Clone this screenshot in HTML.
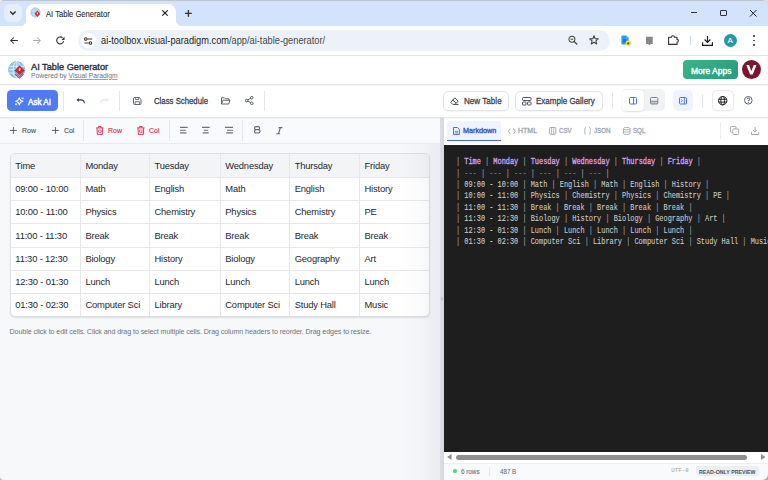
<!DOCTYPE html>
<html><head><meta charset="utf-8">
<style>
*{box-sizing:border-box;margin:0;padding:0}
html,body{width:768px;height:480px;overflow:hidden;background:#fff;font-family:"Liberation Sans",sans-serif;position:relative}
.a{position:absolute}
svg{position:absolute;overflow:visible}
.t{position:absolute;white-space:nowrap;line-height:1}
.sb{font-weight:normal;-webkit-text-stroke:0.28px currentColor;transform-origin:0 0}
.code{position:absolute;left:456px;top:156.3px;font-family:"Liberation Mono",monospace;font-size:8.3px;line-height:11.39px;letter-spacing:0;transform:scaleX(0.8333);transform-origin:0 0;color:#cdcdcd;-webkit-text-stroke:0.08px currentColor;white-space:pre}
.p{color:#a0a0a0}
.h{color:#d29ce0;-webkit-text-stroke:0.35px currentColor}
.g{color:#6e6e6e}
.btn{position:absolute;border:1px solid #e1e4e8;border-radius:5px;background:#fff;box-shadow:0 1px 1px rgba(0,0,0,.04)}
.vs{position:absolute;width:1px;background:#e5e7eb}
.row{position:absolute;left:0;width:418px;height:23.3px;border-bottom:1px solid #e6e8eb}
.cell{position:absolute;top:0;height:100%;font-size:9.4px;letter-spacing:-0.17px;color:#24292f;line-height:23.3px;padding-left:5.4px;white-space:nowrap}
.cd{position:absolute;top:0;width:1px;height:161.5px;background:#e6e8eb}
</style></head><body>

<!-- ============ TAB STRIP ============ -->
<div class="a" style="left:0;top:0;width:768px;height:26px;background:#d3e3fb"></div>
<div class="a" style="left:0;top:0;width:768px;height:1px;background:#bfc5cf"></div>
<div class="a" style="left:4px;top:4px;width:18px;height:18px;border-radius:6px;background:#e7eefb"></div>
<svg style="left:9px;top:10.5px" width="8" height="5" viewBox="0 0 8 5"><path d="M1.2 0.6 L3.9 3.3 L6.6 0.6" fill="none" stroke="#2a2a2a" stroke-width="1.45"/></svg>
<!-- active tab -->
<div class="a" style="left:26px;top:4px;width:150px;height:23px;background:#fff;border-radius:8px 8px 0 0"></div>
<div class="a" style="left:20px;top:20px;width:6px;height:6px;background:radial-gradient(circle at 0 0,transparent 6px,#fff 6.3px)"></div>
<div class="a" style="left:176px;top:20px;width:6px;height:6px;background:radial-gradient(circle at 100% 0,transparent 6px,#fff 6.3px)"></div>
<!-- favicon -->
<svg style="left:30.3px;top:7.2px" width="11" height="11" viewBox="0 0 11 11">
<circle cx="5.5" cy="5.5" r="4.6" fill="#a6d6f3" stroke="#a9bccb" stroke-width="0.9"/>
<path d="M1.5 4H9.5M1.5 7H9.5M4 1.2V9.8M7 1.2V9.8" stroke="#d5ecfa" stroke-width="0.5"/>
<path d="M7.3 3.6L10.1 6.8L7.3 10L4.5 6.8Z" fill="#d42a38"/>
<path d="M6.8 5.4H7.9V6.8L7.3 7.6H6.8Z" fill="#fff"/>
</svg>
<div class="t" style="left:46.2px;top:10.2px;font-size:8.7px;transform:scaleX(0.875);transform-origin:0 0;-webkit-text-stroke:0.1px currentColor;color:#1f1f1f">AI Table Generator</div>
<svg style="left:162px;top:10px" width="6" height="6" viewBox="0 0 6 6"><path d="M0.3 0.3L5.7 5.7M5.7 0.3L0.3 5.7" stroke="#1f1f1f" stroke-width="1.2"/></svg>
<svg style="left:184.8px;top:9.6px" width="6.8" height="6.8" viewBox="0 0 6.8 6.8"><path d="M3.4 0V6.8M0 3.4H6.8" stroke="#333" stroke-width="1.35"/></svg>
<!-- window controls -->
<div class="a" style="left:690.5px;top:12px;width:6.8px;height:1px;background:#333"></div>
<div class="a" style="left:720px;top:9.7px;width:6.7px;height:6.4px;border:1px solid #333;border-radius:1px"></div>
<svg style="left:750px;top:9.7px" width="6.5" height="6.5" viewBox="0 0 6.5 6.5"><path d="M0 0L6.5 6.5M6.5 0L0 6.5" stroke="#1f1f1f" stroke-width="1"/></svg>

<!-- ============ BROWSER TOOLBAR ============ -->
<div class="a" style="left:0;top:26px;width:768px;height:29px;background:#fff"></div>
<div class="a" style="left:0;top:55px;width:768px;height:1px;background:#e1e3e6"></div>
<!-- back / fwd / reload -->
<svg style="left:10.4px;top:37.2px" width="8" height="7" viewBox="0 0 8 7"><path d="M7.8 3.5H0.9M3.8 0.5L0.8 3.5L3.8 6.5" fill="none" stroke="#2a2a2a" stroke-width="1.05"/></svg>
<svg style="left:33.1px;top:37.2px" width="8" height="7" viewBox="0 0 8 7"><path d="M0.2 3.5H7.1M4.2 0.5L7.2 3.5L4.2 6.5" fill="none" stroke="#a8abb0" stroke-width="1.05"/></svg>
<svg style="left:56px;top:36px" width="9" height="9" viewBox="0 0 9 9"><path d="M7.6 5.2A3.5 3.5 0 1 1 6.6 1.9" fill="none" stroke="#333" stroke-width="1.15"/><path d="M8.5 0.8V3.9H5.4Z" fill="#333"/></svg>
<!-- omnibox -->
<div class="a" style="left:77.7px;top:29.8px;width:532px;height:21.6px;border-radius:11px;background:#edf2fa"></div>
<div class="a" style="left:80.6px;top:33px;width:15.2px;height:15.2px;border-radius:50%;background:#fff"></div>
<svg style="left:84px;top:36.5px" width="9" height="8" viewBox="0 0 9 8"><path d="M3.4 2H8.2M0.4 6H4.6" stroke="#3c3c3c" stroke-width="1.1"/><circle cx="1.8" cy="2" r="1.3" fill="none" stroke="#3c3c3c" stroke-width="1.1"/><circle cx="6.4" cy="6" r="1.3" fill="none" stroke="#3c3c3c" stroke-width="1.1"/></svg>
<div class="t" style="left:101.3px;top:36px;font-size:10.4px;transform:scaleX(0.89);transform-origin:0 0;color:#1f1f1f">ai-toolbox.visual-paradigm.com<span style="color:#474747">/app/ai-table-generator/</span></div>
<!-- zoom + star -->
<svg style="left:568.2px;top:35px" width="11" height="11" viewBox="0 0 11 11"><circle cx="3.9" cy="4.2" r="3" fill="none" stroke="#444" stroke-width="1.05"/><path d="M6.1 6.5L9.3 9.5M2.6 4.2H5.2" stroke="#444" stroke-width="1.05"/></svg>
<svg style="left:589px;top:35px" width="10" height="10" viewBox="0 0 10 10"><path d="M5 0.8L6.2 3.7L9.3 3.9L6.9 5.9L7.7 9L5 7.3L2.3 9L3.1 5.9L0.7 3.9L3.8 3.7Z" fill="none" stroke="#474747" stroke-width="1.1" stroke-linejoin="round"/></svg>
<!-- extensions -->
<svg style="left:621.4px;top:35px" width="11" height="11" viewBox="0 0 11 11"><path d="M0.4 1.2A0.8 0.8 0 0 1 1.2 0.4H5.2L7.6 2.8V9.6H1.2A0.8 0.8 0 0 1 0.4 8.8Z" fill="#2f9be9"/><path d="M5.2 0.4L7.6 2.8H5.2Z" fill="#45d0d8"/><rect x="2" y="4" width="3" height="3.5" fill="#2277c2"/><circle cx="7.3" cy="8.2" r="2.7" fill="#f4dc3c"/><circle cx="7.3" cy="8.4" r="1.1" fill="#4a5a3a"/></svg>
<svg style="left:646.3px;top:36px" width="7" height="10" viewBox="0 0 7 10"><path d="M0 0.8H6.7V7.9H4.6L3.35 9.3L2.1 7.9H0Z" fill="#858585"/></svg>
<svg style="left:667.7px;top:35px" width="12" height="10" viewBox="0 0 12 10"><path d="M0.6 2.2H3.4A1.5 1.5 0 0 1 6.4 2.2H9V4.4A1.4 1.4 0 0 1 9 7.2V9.4H0.6Z" fill="none" stroke="#333" stroke-width="1.1" stroke-linejoin="round"/></svg>
<div class="a" style="left:689.5px;top:36px;width:1px;height:9px;background:#c9d7f0"></div>
<svg style="left:702px;top:35.5px" width="11" height="10" viewBox="0 0 11 10"><path d="M5.5 0V6.3M2.6 3.5L5.5 6.4L8.4 3.5M0.6 6.2V9.3H10.4V6.2" fill="none" stroke="#1f1f1f" stroke-width="1.2"/></svg>
<div class="a" style="left:724px;top:33.7px;width:13.2px;height:13.2px;border-radius:50%;background:#2a98a4"></div>
<div class="t" style="left:727.6px;top:36.6px;font-size:8px;color:#fff">A</div>
<div class="a" style="left:753.3px;top:35.3px;width:1.6px;height:1.6px;border-radius:50%;background:#3a3a3a"></div>
<div class="a" style="left:753.3px;top:39.7px;width:1.6px;height:1.6px;border-radius:50%;background:#3a3a3a"></div>
<div class="a" style="left:753.3px;top:44.1px;width:1.6px;height:1.6px;border-radius:50%;background:#3a3a3a"></div>

<!-- ============ APP HEADER ============ -->
<div class="a" style="left:0;top:56px;width:768px;height:28.5px;background:#fff"></div>
<div class="a" style="left:0;top:83.6px;width:768px;height:1.2px;background:#e4e6e9;box-shadow:0 1px 1.5px rgba(0,0,0,.05)"></div>
<svg style="left:7.7px;top:60.5px" width="17.4" height="17.4" viewBox="0 0 17.4 17.4">
<circle cx="8.7" cy="8.7" r="8.1" fill="#86c8ef" stroke="#a3b5c2" stroke-width="1"/>
<path d="M1.2 5.3H16.2M0.8 8.7H16.6M1.2 12.1H16.2" stroke="#e4f3fc" stroke-width="0.9"/>
<ellipse cx="8.7" cy="8.7" rx="3.6" ry="8" fill="none" stroke="#e4f3fc" stroke-width="0.9"/>
<path d="M8.7 0.7V16.7" stroke="#e4f3fc" stroke-width="0.8"/>
<path d="M7.2 11.6L11.4 15.8L15.6 11.6M7.2 13.3L11.4 17.2L15.6 13.3" fill="none" stroke="#d42330" stroke-width="1"/>
<path d="M11.55 4.5L16.9 9.5L11.55 14.3L6.4 9.5Z" fill="#d42330"/>
<path d="M10.8 7.3H12.5V8.9L11.9 10H10.8Z" fill="#fff"/>
</svg>
<div class="t sb" style="left:31px;top:62.7px;font-size:9.3px;transform:scaleX(0.99);-webkit-text-stroke:0.38px currentColor;color:#2b3140">AI Table Generator</div>
<div class="t" style="left:31px;top:71.9px;font-size:7.3px;transform:scaleX(0.925);transform-origin:0 0;color:#6b7280">Powered by <span style="text-decoration:underline;text-decoration-color:#9ca3af">Visual Paradigm</span></div>
<div class="a" style="left:683.4px;top:60.4px;width:54.2px;height:18.7px;border-radius:4px;background:linear-gradient(135deg,#3ab585,#2a9a7f)"></div>
<div class="t sb" style="left:690.7px;top:66.8px;font-size:8.8px;transform:scaleX(0.96);-webkit-text-stroke:0.4px #fff;color:#fff">More Apps</div>
<div class="a" style="left:741.8px;top:60.1px;width:19.2px;height:19.2px;border-radius:50%;background:#7c1630"></div>
<svg style="left:0;top:0" width="768" height="480"><path d="M746.3 65H749.1L751.4 71.3L753.7 65H756.5L752.7 74.6H750.1Z" fill="#fff"/></svg>

<!-- ============ APP TOOLBAR ============ -->
<div class="a" style="left:0;top:85px;width:768px;height:32px;background:#fff"></div>
<div class="a" style="left:0;top:116.6px;width:768px;height:1.5px;background:#e3e5e9;box-shadow:0 1px 1.5px rgba(0,0,0,.05)"></div>
<div class="a" style="left:7.1px;top:90.3px;width:51px;height:20.8px;border-radius:4.5px;background:#4e7cf6"></div>
<svg style="left:14.7px;top:96.8px" width="9" height="9" viewBox="0 0 9 9"><path d="M4.3 0.7Q4.8 3.7 8 4.26Q4.8 4.8 4.3 7.9Q3.8 4.8 0.7 4.26Q3.8 3.7 4.3 0.7Z" fill="none" stroke="#fff" stroke-width="1.05" stroke-linejoin="round"/><path d="M6.9 1.2H8.6" stroke="#fff" stroke-width="0.95" stroke-linecap="round"/><circle cx="1" cy="7.3" r="0.95" fill="#fff"/></svg>
<div class="t sb" style="left:27.8px;top:97.5px;font-size:8.8px;transform:scaleX(0.92);-webkit-text-stroke:0.45px #fff;color:#fff">Ask AI</div>
<div class="vs" style="left:62.5px;top:90.8px;height:20px"></div>
<svg style="left:76px;top:97.6px" width="9" height="5.5" viewBox="0 0 9 5.5"><path d="M0.3 1.9L2.9 0V3.8Z" fill="#374151"/><path d="M2.5 1.9H4.6A3.6 3.6 0 0 1 8.4 5.2" fill="none" stroke="#374151" stroke-width="1.15"/></svg>
<svg style="left:100px;top:97.6px" width="9" height="5.5" viewBox="0 0 9 5.5"><path d="M8.7 1.9L6.1 0V3.8Z" fill="#e2e5e9"/><path d="M6.5 1.9H4.4A3.6 3.6 0 0 0 0.6 5.2" fill="none" stroke="#e2e5e9" stroke-width="1.15"/></svg>
<div class="vs" style="left:118.8px;top:90.8px;height:20px"></div>
<svg style="left:132.6px;top:96.7px" width="8.5" height="8" viewBox="0 0 8.5 8"><path d="M1.5 0.5H6.2L8 2.3V6.5A1 1 0 0 1 7 7.5H1.5A1 1 0 0 1 0.5 6.5V1.5A1 1 0 0 1 1.5 0.5Z" fill="none" stroke="#5b6472" stroke-width="1"/><path d="M2.4 0.6V2.5H5.6V0.6M2.1 7.4V4.7H6.4V7.4" fill="none" stroke="#5b6472" stroke-width="0.9"/></svg>
<div class="t sb" style="left:154.3px;top:97.1px;font-size:9px;transform:scaleX(0.865);color:#374151">Class Schedule</div>
<svg style="left:221px;top:96.9px" width="9.5" height="7.5" viewBox="0 0 9.5 7.5"><path d="M0.5 7V0.8H3.5L4.5 1.8H8V3M0.5 7L1.8 3.3H9L7.7 7Z" fill="none" stroke="#4b5563" stroke-width="0.9" stroke-linejoin="round"/></svg>
<svg style="left:244.6px;top:96px" width="8.5" height="9" viewBox="0 0 8.5 9"><circle cx="6.8" cy="1.7" r="1.3" fill="none" stroke="#4b5563" stroke-width="0.9"/><circle cx="1.7" cy="4.5" r="1.3" fill="none" stroke="#4b5563" stroke-width="0.9"/><circle cx="6.8" cy="7.3" r="1.3" fill="none" stroke="#4b5563" stroke-width="0.9"/><path d="M2.8 3.9L5.7 2.3M2.8 5.1L5.7 6.7" stroke="#4b5563" stroke-width="0.9"/></svg>
<div class="vs" style="left:264.4px;top:90.8px;height:20px"></div>

<div class="btn" style="left:442.6px;top:90.6px;width:66.8px;height:20.6px"></div>
<svg style="left:450px;top:97px" width="9" height="8" viewBox="0 0 9 8"><path d="M4.8 0.8L8.2 4.2L5 7.4H2.8L0.8 5.4Z M2.8 3L6 6.2M5 7.4H8.5" fill="none" stroke="#374151" stroke-width="0.95" stroke-linejoin="round"/></svg>
<div class="t sb" style="left:464px;top:97.1px;font-size:9px;transform:scaleX(0.9);color:#374151">New Table</div>
<div class="btn" style="left:514.5px;top:90.6px;width:88px;height:20.6px"></div>
<svg style="left:521.5px;top:96.8px" width="9.5" height="8.5" viewBox="0 0 9.5 8.5"><rect x="0.5" y="0.5" width="8.5" height="3" rx="0.8" fill="none" stroke="#374151" stroke-width="0.9"/><rect x="0.5" y="5" width="3.5" height="3" rx="0.6" fill="none" stroke="#374151" stroke-width="0.9"/><rect x="5.5" y="5" width="3.5" height="3" rx="0.6" fill="none" stroke="#374151" stroke-width="0.9"/></svg>
<div class="t sb" style="left:536px;top:97.1px;font-size:9px;transform:scaleX(0.89);color:#374151">Example Gallery</div>
<div class="vs" style="left:611.5px;top:93px;height:16px"></div>
<div class="a" style="left:621.5px;top:89.2px;width:43.8px;height:22.3px;border-radius:5px;background:#f1f2f4"></div>
<div class="a" style="left:621.8px;top:89.6px;width:22px;height:21.6px;border-radius:4px;background:#fff;box-shadow:0 0.5px 1.5px rgba(0,0,0,.12)"></div>
<svg style="left:628.8px;top:96.9px" width="8" height="7.5" viewBox="0 0 8 7.5"><rect x="0.5" y="0.5" width="7" height="6.5" rx="1" fill="none" stroke="#4f6df5" stroke-width="1"/><path d="M4.6 0.5V7" stroke="#4f6df5" stroke-width="1"/></svg>
<svg style="left:649.7px;top:96.9px" width="8.3" height="7.5" viewBox="0 0 8.3 7.5"><rect x="0.5" y="4.2" width="7.3" height="2.8" fill="#c4c8cf"/><rect x="0.5" y="0.5" width="7.3" height="6.5" rx="1" fill="none" stroke="#7b818b" stroke-width="1"/><path d="M0.5 4.2H7.8" stroke="#7b818b" stroke-width="0.9"/></svg>
<div class="a" style="left:673px;top:90.25px;width:20px;height:20.75px;border-radius:5px;background:#edf3ff"></div>
<svg style="left:679px;top:96.9px" width="8" height="7.5" viewBox="0 0 8 7.5"><rect x="0.5" y="0.5" width="7" height="6.5" rx="1" fill="none" stroke="#4f6df5" stroke-width="1"/><path d="M5.4 0.5V7M2 2.3L3.4 3.75L2 5.2" fill="none" stroke="#4f6df5" stroke-width="0.9"/></svg>
<div class="vs" style="left:702px;top:94px;height:14px"></div>
<div class="btn" style="left:712.4px;top:90.4px;width:21.2px;height:20.4px;border-color:#e8eaed"></div>
<svg style="left:718.2px;top:95.7px" width="9.4" height="9.4" viewBox="0 0 9.4 9.4"><circle cx="4.7" cy="4.7" r="4.2" fill="none" stroke="#1a1a1a" stroke-width="1"/><ellipse cx="4.7" cy="4.7" rx="1.9" ry="4.2" fill="none" stroke="#1a1a1a" stroke-width="0.95"/><path d="M0.7 3.3H8.7M0.7 6.1H8.7" stroke="#1a1a1a" stroke-width="0.95"/></svg>
<svg style="left:743.7px;top:96.4px" width="8.6" height="8.6" viewBox="0 0 8.6 8.6"><circle cx="4.3" cy="4.3" r="3.8" fill="none" stroke="#4b5563" stroke-width="0.9"/><path d="M3 3.2A1.3 1.3 0 1 1 4.3 4.6V5.3" fill="none" stroke="#4b5563" stroke-width="0.9"/><circle cx="4.3" cy="6.6" r="0.5" fill="#4b5563"/></svg>

<!-- ============ LEFT PANEL ============ -->
<div class="a" style="left:0;top:117.8px;width:440px;height:363px;background:#f7f8fa"></div>
<div class="a" style="left:0;top:117.8px;width:440px;height:25.3px;background:#f9fafb"></div>
<div class="a" style="left:0;top:143px;width:440px;height:1px;background:#e7e9ec"></div>
<!-- table toolbar -->
<svg style="left:10.3px;top:126.8px" width="6.8" height="6.8" viewBox="0 0 6.8 6.8"><path d="M3.4 0V6.8M0 3.4H6.8" stroke="#4b5563" stroke-width="0.9"/></svg>
<div class="t sb" style="left:22px;top:127px;font-size:7.9px;transform:scaleX(0.88);-webkit-text-stroke:0.15px currentColor;color:#4b5563">Row</div>
<svg style="left:52.2px;top:126.8px" width="6.8" height="6.8" viewBox="0 0 6.8 6.8"><path d="M3.4 0V6.8M0 3.4H6.8" stroke="#4b5563" stroke-width="0.9"/></svg>
<div class="t sb" style="left:63.9px;top:127px;font-size:7.9px;transform:scaleX(0.87);-webkit-text-stroke:0.15px currentColor;color:#4b5563">Col</div>
<div class="vs" style="left:83.3px;top:120.2px;height:20.5px"></div>
<svg style="left:96.1px;top:125.6px" width="7.7" height="9.1" viewBox="0 0 7.7 9.1"><path d="M0.2 1.9H7.5M2.6 1.9V0.5H5.1V1.9M1 1.9L1.4 8.6H6.3L6.7 1.9" fill="none" stroke="#e0304e" stroke-width="0.95" stroke-linejoin="round"/><rect x="2.7" y="4" width="2.3" height="2.6" fill="none" stroke="#e0304e" stroke-width="0.7"/></svg>
<div class="t sb" style="left:107.9px;top:127px;font-size:7.9px;transform:scaleX(0.88);-webkit-text-stroke:0.15px currentColor;color:#e0304e">Row</div>
<svg style="left:137.2px;top:125.6px" width="7.7" height="9.1" viewBox="0 0 7.7 9.1"><path d="M0.2 1.9H7.5M2.6 1.9V0.5H5.1V1.9M1 1.9L1.4 8.6H6.3L6.7 1.9" fill="none" stroke="#e0304e" stroke-width="0.95" stroke-linejoin="round"/><rect x="2.7" y="4" width="2.3" height="2.6" fill="none" stroke="#e0304e" stroke-width="0.7"/></svg>
<div class="t sb" style="left:149.2px;top:127px;font-size:7.9px;transform:scaleX(0.87);-webkit-text-stroke:0.15px currentColor;color:#e0304e">Col</div>
<div class="vs" style="left:169.2px;top:120.2px;height:20.5px"></div>
<svg style="left:180.3px;top:127px" width="8" height="7" viewBox="0 0 8 7"><path d="M0 0.4H7.7M0 3.3H5.7M0 5.9H6.5" stroke="#6b7280" stroke-width="1.1"/></svg>
<svg style="left:202.3px;top:127px" width="8" height="7" viewBox="0 0 8 7"><path d="M0 0.4H7.7M1.7 3.3H6.2M0.7 5.9H6.7" stroke="#6b7280" stroke-width="1.1"/></svg>
<svg style="left:225px;top:127px" width="8" height="7" viewBox="0 0 8 7"><path d="M0 0.4H8M2 3.3H8M1.3 5.9H8" stroke="#6b7280" stroke-width="1.1"/></svg>
<div class="vs" style="left:241.9px;top:120.2px;height:20.5px"></div>
<svg style="left:254px;top:126.2px" width="6.5" height="7.7" viewBox="0 0 6.5 7.7"><path d="M1.9 0.6H4.1A1.55 1.55 0 0 1 4.1 3.7H1.9A1.3 1.3 0 0 1 0.6 2.4V1.9A1.3 1.3 0 0 1 1.9 0.6ZM1.9 3.7H4.4A1.65 1.65 0 0 1 4.4 7H1.9A1.3 1.3 0 0 1 0.6 5.7V5A1.3 1.3 0 0 1 1.9 3.7Z" fill="none" stroke="#5f6775" stroke-width="1.15"/></svg>
<svg style="left:275.7px;top:126.5px" width="7" height="7.3" viewBox="0 0 7 7.3"><path d="M2.6 0.6H6.4M0.4 6.8H4.2M4.4 0.6L2.4 6.8" fill="none" stroke="#5f6775" stroke-width="1.1"/></svg>

<!-- table -->
<div class="a" style="left:9.7px;top:153.3px;width:420px;height:163.5px;border:1px solid #dcdfe3;border-radius:5px;background:#fff;overflow:hidden;box-shadow:0 1px 1.5px rgba(0,0,0,.1)">
 <div class="row" style="top:0;background:#f3f4f6"></div>
 <div class="row" style="top:23.4px"></div>
 <div class="row" style="top:46.7px"></div>
 <div class="row" style="top:70px"></div>
 <div class="row" style="top:93.3px"></div>
 <div class="row" style="top:116.6px"></div>
 <div class="cd" style="left:69.3px"></div>
 <div class="cd" style="left:138.4px"></div>
 <div class="cd" style="left:208.9px"></div>
 <div class="cd" style="left:278.6px"></div>
 <div class="cd" style="left:348.4px"></div>
 <div class="cell" style="padding-left:4.6px;left:0px;top:0.2px;height:23.3px">Time</div>
<div class="cell" style="left:69.3px;top:0.2px;height:23.3px">Monday</div>
<div class="cell" style="left:138.4px;top:0.2px;height:23.3px">Tuesday</div>
<div class="cell" style="left:209.2px;top:0.2px;height:23.3px">Wednesday</div>
<div class="cell" style="left:278.6px;top:0.2px;height:23.3px">Thursday</div>
<div class="cell" style="left:348.4px;top:0.2px;height:23.3px">Friday</div>
<div class="cell" style="padding-left:4.6px;left:0px;top:22.7px;height:23.3px">09:00 - 10:00</div>
<div class="cell" style="left:69.3px;top:22.7px;height:23.3px">Math</div>
<div class="cell" style="left:138.4px;top:22.7px;height:23.3px">English</div>
<div class="cell" style="left:209.2px;top:22.7px;height:23.3px">Math</div>
<div class="cell" style="left:278.6px;top:22.7px;height:23.3px">English</div>
<div class="cell" style="left:348.4px;top:22.7px;height:23.3px">History</div>
<div class="cell" style="padding-left:4.6px;left:0px;top:46.0px;height:23.3px">10:00 - 11:00</div>
<div class="cell" style="left:69.3px;top:46.0px;height:23.3px">Physics</div>
<div class="cell" style="left:138.4px;top:46.0px;height:23.3px">Chemistry</div>
<div class="cell" style="left:209.2px;top:46.0px;height:23.3px">Physics</div>
<div class="cell" style="left:278.6px;top:46.0px;height:23.3px">Chemistry</div>
<div class="cell" style="left:348.4px;top:46.0px;height:23.3px">PE</div>
<div class="cell" style="padding-left:4.6px;left:0px;top:69.3px;height:23.3px">11:00 - 11:30</div>
<div class="cell" style="left:69.3px;top:69.3px;height:23.3px">Break</div>
<div class="cell" style="left:138.4px;top:69.3px;height:23.3px">Break</div>
<div class="cell" style="left:209.2px;top:69.3px;height:23.3px">Break</div>
<div class="cell" style="left:278.6px;top:69.3px;height:23.3px">Break</div>
<div class="cell" style="left:348.4px;top:69.3px;height:23.3px">Break</div>
<div class="cell" style="padding-left:4.6px;left:0px;top:92.6px;height:23.3px">11:30 - 12:30</div>
<div class="cell" style="left:69.3px;top:92.6px;height:23.3px">Biology</div>
<div class="cell" style="left:138.4px;top:92.6px;height:23.3px">History</div>
<div class="cell" style="left:209.2px;top:92.6px;height:23.3px">Biology</div>
<div class="cell" style="left:278.6px;top:92.6px;height:23.3px">Geography</div>
<div class="cell" style="left:348.4px;top:92.6px;height:23.3px">Art</div>
<div class="cell" style="padding-left:4.6px;left:0px;top:115.9px;height:23.3px">12:30 - 01:30</div>
<div class="cell" style="left:69.3px;top:115.9px;height:23.3px">Lunch</div>
<div class="cell" style="left:138.4px;top:115.9px;height:23.3px">Lunch</div>
<div class="cell" style="left:209.2px;top:115.9px;height:23.3px">Lunch</div>
<div class="cell" style="left:278.6px;top:115.9px;height:23.3px">Lunch</div>
<div class="cell" style="left:348.4px;top:115.9px;height:23.3px">Lunch</div>
<div class="cell" style="padding-left:4.6px;left:0px;top:139.2px;height:23.3px">01:30 - 02:30</div>
<div class="cell" style="left:69.3px;top:139.2px;height:23.3px">Computer Sci</div>
<div class="cell" style="left:138.4px;top:139.2px;height:23.3px">Library</div>
<div class="cell" style="left:209.2px;top:139.2px;height:23.3px">Computer Sci</div>
<div class="cell" style="left:278.6px;top:139.2px;height:23.3px">Study Hall</div>
<div class="cell" style="left:348.4px;top:139.2px;height:23.3px">Music</div>
</div>
<div class="t" style="left:9.5px;top:328.8px;font-size:7.15px;letter-spacing:-0.1px;color:#6b7280">Double click to edit cells. Click and drag to select multiple cells. Drag column headers to reorder. Drag edges to resize.</div>

<!-- splitter -->
<div class="a" style="left:400px;top:143.5px;width:40px;height:337px;background:linear-gradient(90deg,rgba(110,118,135,0) 0%,rgba(110,118,135,0.03) 50%,rgba(110,118,135,0.10) 100%)"></div>
<div class="a" style="left:440px;top:117.8px;width:4px;height:363px;background:linear-gradient(90deg,#dcdee3,#d5d8dd)"></div>
<div class="a" style="left:441.2px;top:297px;width:1.6px;height:4px;border-radius:1px;background:#c3c8d0"></div>

<!-- ============ RIGHT PANEL ============ -->
<div class="a" style="left:444px;top:117.8px;width:325px;height:27px;background:#fff"></div>
<div class="a" style="left:447px;top:121.4px;width:54.3px;height:19.6px;background:#f0f4fe;border-radius:2px 2px 0 0"></div>
<div class="a" style="left:447px;top:139.8px;width:54.3px;height:1.4px;background:#4562e8"></div>
<svg style="left:452.9px;top:127.2px" width="6.9" height="7.9" viewBox="0 0 6.9 7.9"><path d="M0.5 0.5H4.4L6.4 2.5V7.4H0.5Z" fill="none" stroke="#4562e8" stroke-width="0.95" stroke-linejoin="round"/><path d="M1.8 4.3H5M1.8 5.9H5" stroke="#4562e8" stroke-width="0.8"/></svg>
<div class="t sb" style="left:462.9px;top:127.2px;font-size:7.6px;transform:scaleX(0.95);-webkit-text-stroke:0.4px currentColor;color:#3a55dc">Markdown</div>
<svg style="left:507.9px;top:128px" width="7.8" height="6.5" viewBox="0 0 7.8 6.5"><path d="M2.3 0.5L0.5 3.25L2.3 6M5.5 0.5L7.3 3.25L5.5 6" fill="none" stroke="#9ca3af" stroke-width="0.95"/></svg>
<div class="t sb" style="left:518.3px;top:127.2px;font-size:7.6px;transform:scaleX(0.92);-webkit-text-stroke:0.3px currentColor;color:#9ca3af">HTML</div>
<svg style="left:549px;top:127.3px" width="7.4" height="7.8" viewBox="0 0 7.4 7.8"><rect x="0.5" y="0.5" width="6.4" height="6.8" rx="1" fill="none" stroke="#9ca3af" stroke-width="0.9"/><path d="M2.6 0.5V7.3M4.8 0.5V7.3" stroke="#9ca3af" stroke-width="0.8"/></svg>
<div class="t sb" style="left:559.2px;top:127.2px;font-size:7.6px;transform:scaleX(0.81);-webkit-text-stroke:0.3px currentColor;color:#9ca3af">CSV</div>
<svg style="left:583.7px;top:127.3px" width="7.1" height="7.8" viewBox="0 0 7.1 7.8"><path d="M1.8 0.5Q0.9 0.5 0.9 1.5V3.2L0.3 3.9L0.9 4.6V6.3Q0.9 7.3 1.8 7.3M5.3 0.5Q6.2 0.5 6.2 1.5V3.2L6.8 3.9L6.2 4.6V6.3Q6.2 7.3 5.3 7.3" fill="none" stroke="#9ca3af" stroke-width="0.85"/></svg>
<div class="t sb" style="left:594px;top:127.2px;font-size:7.6px;transform:scaleX(0.82);-webkit-text-stroke:0.3px currentColor;color:#9ca3af">JSON</div>
<svg style="left:622.8px;top:127.2px" width="7.5" height="8" viewBox="0 0 7.5 8"><ellipse cx="3.75" cy="1.6" rx="3.2" ry="1.2" fill="none" stroke="#9ca3af" stroke-width="0.85"/><path d="M0.55 1.6V6.4A3.2 1.2 0 0 0 6.95 6.4V1.6M0.55 4A3.2 1.2 0 0 0 6.95 4" fill="none" stroke="#9ca3af" stroke-width="0.85"/></svg>
<div class="t sb" style="left:632.7px;top:127.2px;font-size:7.6px;transform:scaleX(0.81);-webkit-text-stroke:0.3px currentColor;color:#9ca3af">SQL</div>
<div class="vs" style="left:719.7px;top:122px;height:17.4px;background:#eceef1"></div>
<svg style="left:730px;top:126.2px" width="9.2" height="9" viewBox="0 0 9.2 9"><rect x="2.8" y="2.8" width="5.9" height="5.7" rx="1" fill="none" stroke="#9ca3af" stroke-width="0.95"/><path d="M1.8 6.2H1.5A1 1 0 0 1 0.5 5.2V1.5A1 1 0 0 1 1.5 0.5H5.2A1 1 0 0 1 6.2 1.5V1.8" fill="none" stroke="#9ca3af" stroke-width="0.95"/></svg>
<svg style="left:751px;top:127px" width="8.2" height="8" viewBox="0 0 8.2 8"><path d="M4.1 0V5M2 3L4.1 5.1L6.2 3M0.5 5V7.5H7.7V5" fill="none" stroke="#9ca3af" stroke-width="0.95"/></svg>

<div class="a" style="left:444px;top:144.8px;width:325px;height:307px;background:#1e1e1e"></div>
<div class="code"><span class="p">|</span> <span class="h">Time</span> <span class="p">|</span> <span class="h">Monday</span> <span class="p">|</span> <span class="h">Tuesday</span> <span class="p">|</span> <span class="h">Wednesday</span> <span class="p">|</span> <span class="h">Thursday</span> <span class="p">|</span> <span class="h">Friday</span> <span class="p">|</span>
<span class="p">|</span> <span class="g">---</span> <span class="p">|</span> <span class="g">---</span> <span class="p">|</span> <span class="g">---</span> <span class="p">|</span> <span class="g">---</span> <span class="p">|</span> <span class="g">---</span> <span class="p">|</span> <span class="g">---</span> <span class="p">|</span>
<span class="p">|</span> 09:00 - 10:00 <span class="p">|</span> Math <span class="p">|</span> English <span class="p">|</span> Math <span class="p">|</span> English <span class="p">|</span> History <span class="p">|</span>
<span class="p">|</span> 10:00 - 11:00 <span class="p">|</span> Physics <span class="p">|</span> Chemistry <span class="p">|</span> Physics <span class="p">|</span> Chemistry <span class="p">|</span> PE <span class="p">|</span>
<span class="p">|</span> 11:00 - 11:30 <span class="p">|</span> Break <span class="p">|</span> Break <span class="p">|</span> Break <span class="p">|</span> Break <span class="p">|</span> Break <span class="p">|</span>
<span class="p">|</span> 11:30 - 12:30 <span class="p">|</span> Biology <span class="p">|</span> History <span class="p">|</span> Biology <span class="p">|</span> Geography <span class="p">|</span> Art <span class="p">|</span>
<span class="p">|</span> 12:30 - 01:30 <span class="p">|</span> Lunch <span class="p">|</span> Lunch <span class="p">|</span> Lunch <span class="p">|</span> Lunch <span class="p">|</span> Lunch <span class="p">|</span>
<span class="p">|</span> 01:30 - 02:30 <span class="p">|</span> Computer Sci <span class="p">|</span> Library <span class="p">|</span> Computer Sci <span class="p">|</span> Study Hall <span class="p">|</span> Music</div>

<!-- scrollbar -->
<div class="a" style="left:444px;top:451.7px;width:325px;height:11.2px;background:#fff"></div>
<svg style="left:447px;top:454.3px" width="4.6" height="5.9" viewBox="0 0 4.6 5.9"><path d="M4.6 0V5.9L0 2.95Z" fill="#8e8e8e"/></svg>
<div class="a" style="left:455.5px;top:454.6px;width:291px;height:5.6px;border-radius:3px;background:#8f8f8f"></div>
<svg style="left:760.6px;top:454px" width="4.6" height="5.9" viewBox="0 0 4.6 5.9"><path d="M0 0V5.9L4.6 2.95Z" fill="#8e8e8e"/></svg>
<!-- status -->
<div class="a" style="left:444px;top:462.8px;width:325px;height:18px;background:#f9fafb"></div>
<div class="a" style="left:444px;top:462.8px;width:325px;height:1px;background:#eceef1"></div>
<div class="a" style="left:453px;top:469.4px;width:3.7px;height:3.7px;border-radius:50%;background:#4ade80"></div>
<div class="t sb" style="left:460.5px;top:468.1px;font-size:7px;transform:scaleX(0.9);-webkit-text-stroke:0.1px currentColor;color:#6b7280">6 rows</div>
<div class="vs" style="left:489.4px;top:467px;height:9px"></div>
<div class="t sb" style="left:499.5px;top:468.1px;font-size:7px;transform:scaleX(0.885);-webkit-text-stroke:0.1px currentColor;color:#6b7280">487 B</div>
<div class="t" style="left:671.2px;top:468.4px;font-family:'Liberation Mono',monospace;font-size:5.9px;color:#9ca3af">UTF-8</div>
<div class="a" style="left:696.3px;top:466.4px;width:62.4px;height:9.9px;border-radius:3px;background:#eceef1"></div>
<div class="t" style="left:699px;top:468.9px;font-size:6px;font-weight:bold;transform:scaleX(0.876);transform-origin:0 0;color:#4b5563">READ-ONLY PREVIEW</div>
<div class="a" style="left:0;top:84.8px;width:768px;height:1.2px;background:rgba(0,0,0,.035)"></div>
<div class="a" style="left:0;top:118.1px;width:768px;height:1.2px;background:rgba(0,0,0,.03)"></div>
<svg style="left:0;top:0" width="768" height="480">
<path d="M0 0H4A4 4 0 0 0 0 4Z" fill="#e9e9e9"/>
<path d="M768 0H762A6 6 0 0 1 768 6Z" fill="#dedede"/>
<path d="M0 480V476A4 4 0 0 0 4 480Z" fill="#bdbdbd"/>
<path d="M768 480V474A6 6 0 0 1 762 480Z" fill="#b0b0b0"/>
</svg>
</body></html>
